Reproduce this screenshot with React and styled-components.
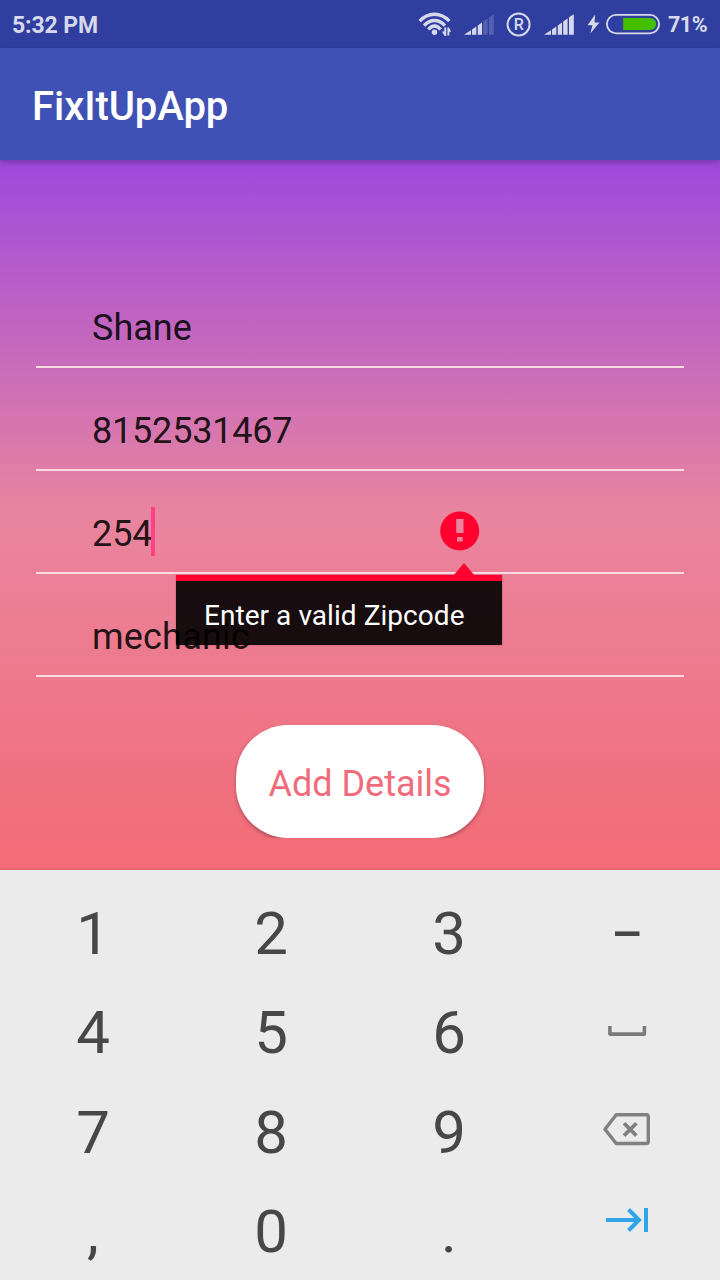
import React from 'react';
import styled, { createGlobalStyle } from 'styled-components';

const GlobalStyle = createGlobalStyle`
  * { box-sizing: border-box; }
  body { margin: 0; background: #ebebeb; font-family: Roboto, "Liberation Sans", sans-serif; }
`;

const Screen = styled.main`
  width: 720px;
  height: 1280px;
  overflow: hidden;
  display: flex;
  flex-direction: column;
`;

const StatusBar = styled.div`
  flex: none;
  height: 48px;
  padding: 2px 12px 0 12px;
  display: flex;
  align-items: center;
  justify-content: space-between;
  background: #303f9f;
  color: #d6d9ec;
  font-size: 23px;
  font-weight: 700;
  letter-spacing: -0.1px;
`;

const StatusGroup = styled.div`
  display: flex;
  align-items: center;
  gap: 8px;
`;

const StatusIcons = styled.svg`
  display: block;
  margin-top: -2px;
  letter-spacing: 0;
`;

const Percent = styled.span`
  width: 40px;
  margin-top: -2px;
  font-size: 21.5px;
  font-weight: 700;
  letter-spacing: -0.5px;
`;

const AppBar = styled.header`
  flex: none;
  position: relative;
  z-index: 1;
  height: 112px;
  padding: 4px 32px 0;
  display: flex;
  align-items: center;
  background: #3f51b5;
  box-shadow: 0 2px 7px rgba(0, 0, 0, 0.28);
`;

const Title = styled.h1`
  margin: 0;
  color: #fff;
  font-size: 40px;
  font-weight: 500;
  letter-spacing: -0.05px;
`;

const Form = styled.section`
  flex: none;
  height: 710px;
  padding: 105px 36px 0;
  display: flex;
  flex-direction: column;
  background: linear-gradient(#9e49de, #e9859f 50%, #f36b76);
`;

const Field = styled.div`
  position: relative;
  flex: none;
  height: 103px;
  padding: 39px 56px 0;
  display: flex;
  align-items: flex-start;
  border-bottom: 2px solid #fbdbe0;
  color: rgba(0, 0, 0, 0.87);
  font-size: 36px;
  line-height: 48px;
  letter-spacing: ${({ $tracking = 0 }) => $tracking}px;
`;

const Caret = styled.span`
  width: 4px;
  height: 49px;
  margin: -3px 0 0 -1px;
  background: #ff4081;
`;

const ErrorIcon = styled.svg`
  margin: -4px 0 0 auto;
  transform: translateX(-148px);
`;

const Tooltip = styled.div`
  position: absolute;
  z-index: 1;
  top: 104px;
  left: 140px;
  width: 326px;
  height: 70px;
  padding: 5px 28px 0;
  border-top: 6px solid #ff002f;
  background: rgba(0, 0, 0, 0.9);
  background-clip: padding-box;
  color: #fff;
  font-size: 28px;
  line-height: 59px;
  letter-spacing: 0.05px;
  white-space: nowrap;
  box-shadow: 0 0 2px rgba(0, 0, 0, 0.25);

  &::before {
    content: '';
    position: absolute;
    top: -18px;
    left: 277px;
    border: solid transparent;
    border-width: 0 11px 13px;
    border-bottom-color: #ff002f;
  }
`;

const ButtonClip = styled.div`
  align-self: center;
  margin-top: 38px;
  padding: 10px 10px 0;
  overflow: hidden;
`;

const AddButton = styled.button`
  display: block;
  width: 248px;
  height: 113px;
  padding: 4px 0 0;
  border: 0;
  border-radius: 52px;
  background: #fff;
  color: #f16c7b;
  font: 400 36px Roboto, "Liberation Sans", sans-serif;
  box-shadow: 0 2px 4px rgba(0, 0, 0, 0.28);
`;

const Keyboard = styled.section`
  flex: none;
  height: 410px;
  padding: 14.4px 4px 0;
  display: grid;
  grid-template-columns: repeat(4, 178px);
  grid-auto-rows: 99.3px;
  background: #ebebeb;
  box-shadow: 0 -1px 3px rgba(0, 0, 0, 0.1);
`;

const Key = styled.div`
  display: flex;
  align-items: center;
  justify-content: center;
  color: #474747;
  font-size: 60px;
  line-height: 70px;
`;

const Dash = styled.span`
  padding-top: 1px;
  font-size: 49px;
  font-weight: 500;
`;

const SIGNAL_BARS = [
  'M0 20.5L7 16V20.5Z',
  'M8 15.2L12.3 12.3V20.5H8Z',
  'M13.8 11.2L18 8.2V20.5H13.8Z',
  'M19.2 7.2L23.6 4.1V20.5H19.2Z',
  'M25 3L29.8 0V20.5H25Z',
];

function Signal({ x, strength }) {
  return (
    <g transform={`translate(${x} 14.3)`}>
      {SIGNAL_BARS.map((d, i) => (
        <path key={d} d={d} opacity={i < strength ? 1 : 0.22} />
      ))}
    </g>
  );
}

function SystemIcons() {
  return (
    <StatusIcons width="242" height="48" viewBox="418 0 242 48" fill="#d6d9ec">
      <g fill="none" stroke="#d6d9ec" strokeWidth="3.3">
        <path d="M419.7 21.2C428 11.9 441 11.9 449.3 21.2" />
        <path d="M424.1 25.6C430 18.8 439 18.8 444.9 25.6" />
        <path d="M428.4 29.6C432 24.8 437 24.8 440.6 29.6" />
      </g>
      <circle cx="434.5" cy="32.2" r="2.7" />
      <path d="M444.3 27.5H446.2V36H444.6L442 31.5H444.3ZM447.4 27.5H448.9L451.2 31.8H449.3V35.6H447.4Z" />
      <Signal x={464} strength={3} />
      <circle cx="518.6" cy="24.5" r="11" fill="none" stroke="#d6d9ec" strokeWidth="2" />
      <text x="518.7" y="30" textAnchor="middle" fontSize="16" fontWeight="500">R</text>
      <Signal x={544} strength={5} />
      <path d="M595.2 14.5L587.5 25.3H592.5L590.3 33.5L599.5 22.4H594.5Z" />
      <rect x="606.9" y="14.9" width="52.2" height="18.4" rx="9.2" fill="none" stroke="#d6d9ec" strokeWidth="1.8" />
      <path d="M623.2 18h27a6 6 0 0 1 0 12h-27Z" fill="#43c000" />
    </StatusIcons>
  );
}

function SpaceIcon() {
  return (
    <svg width="48" height="48" viewBox="603 1009 48 48" fill="none" stroke="#7b7b7b" strokeWidth="3.6" strokeLinejoin="round">
      <path d="M609.9 1026v8.1h34.5V1026" />
    </svg>
  );
}

function BackspaceIcon() {
  return (
    <svg width="48" height="48" viewBox="603 1109 48 48" fill="none" stroke="#808080" strokeWidth="3.4" strokeLinejoin="round">
      <path d="M616.2 1114.8H646.3Q648.3 1114.8 648.3 1116.8V1141.5Q648.3 1143.5 646.3 1143.5H616.2L605 1129.2Z" />
      <path d="M624 1123.2L636.4 1135.6M636.4 1123.2L624 1135.6" strokeWidth="3.7" />
    </svg>
  );
}

function NextIcon() {
  return (
    <svg width="48" height="48" viewBox="603 1208 48 48" fill="none" stroke="#2fa4e7" strokeWidth="4">
      <path d="M606 1220H639M628.5 1209.5L639 1220L628.5 1230.5M646 1208V1232" />
    </svg>
  );
}

const KEYS = [
  '1', '2', '3', <Dash key="dash">–</Dash>,
  '4', '5', '6', <SpaceIcon key="space" />,
  '7', '8', '9', <BackspaceIcon key="backspace" />,
  ',', '0', '.', <NextIcon key="next" />,
];

export default function App() {
  return (
    <Screen>
      <GlobalStyle />
      <StatusBar>
        <span>5:32 PM</span>
        <StatusGroup>
          <SystemIcons />
          <Percent>71%</Percent>
        </StatusGroup>
      </StatusBar>
      <AppBar>
        <Title>FixItUpApp</Title>
      </AppBar>
      <Form>
        <Field>Shane</Field>
        <Field $tracking={-0.2}>8152531467</Field>
        <Field $tracking={-0.1}>
          254
          <Caret />
          <ErrorIcon width="40" height="48" viewBox="440 506 40 48">
            <path
              fill="#ff002f"
              fillRule="evenodd"
              d="M440.2 531a19.5 19.5 0 1 0 39 0a19.5 19.5 0 1 0 -39 0ZM456.2 519h7.3v14h-7.3ZM457 537h5.6v4.6H457Z"
            />
          </ErrorIcon>
          <Tooltip>Enter a valid Zipcode</Tooltip>
        </Field>
        <Field $tracking={0.2}>mechanic</Field>
        <ButtonClip>
          <AddButton>Add Details</AddButton>
        </ButtonClip>
      </Form>
      <Keyboard>
        {KEYS.map((key, i) => (
          <Key key={i}>{key}</Key>
        ))}
      </Keyboard>
    </Screen>
  );
}
